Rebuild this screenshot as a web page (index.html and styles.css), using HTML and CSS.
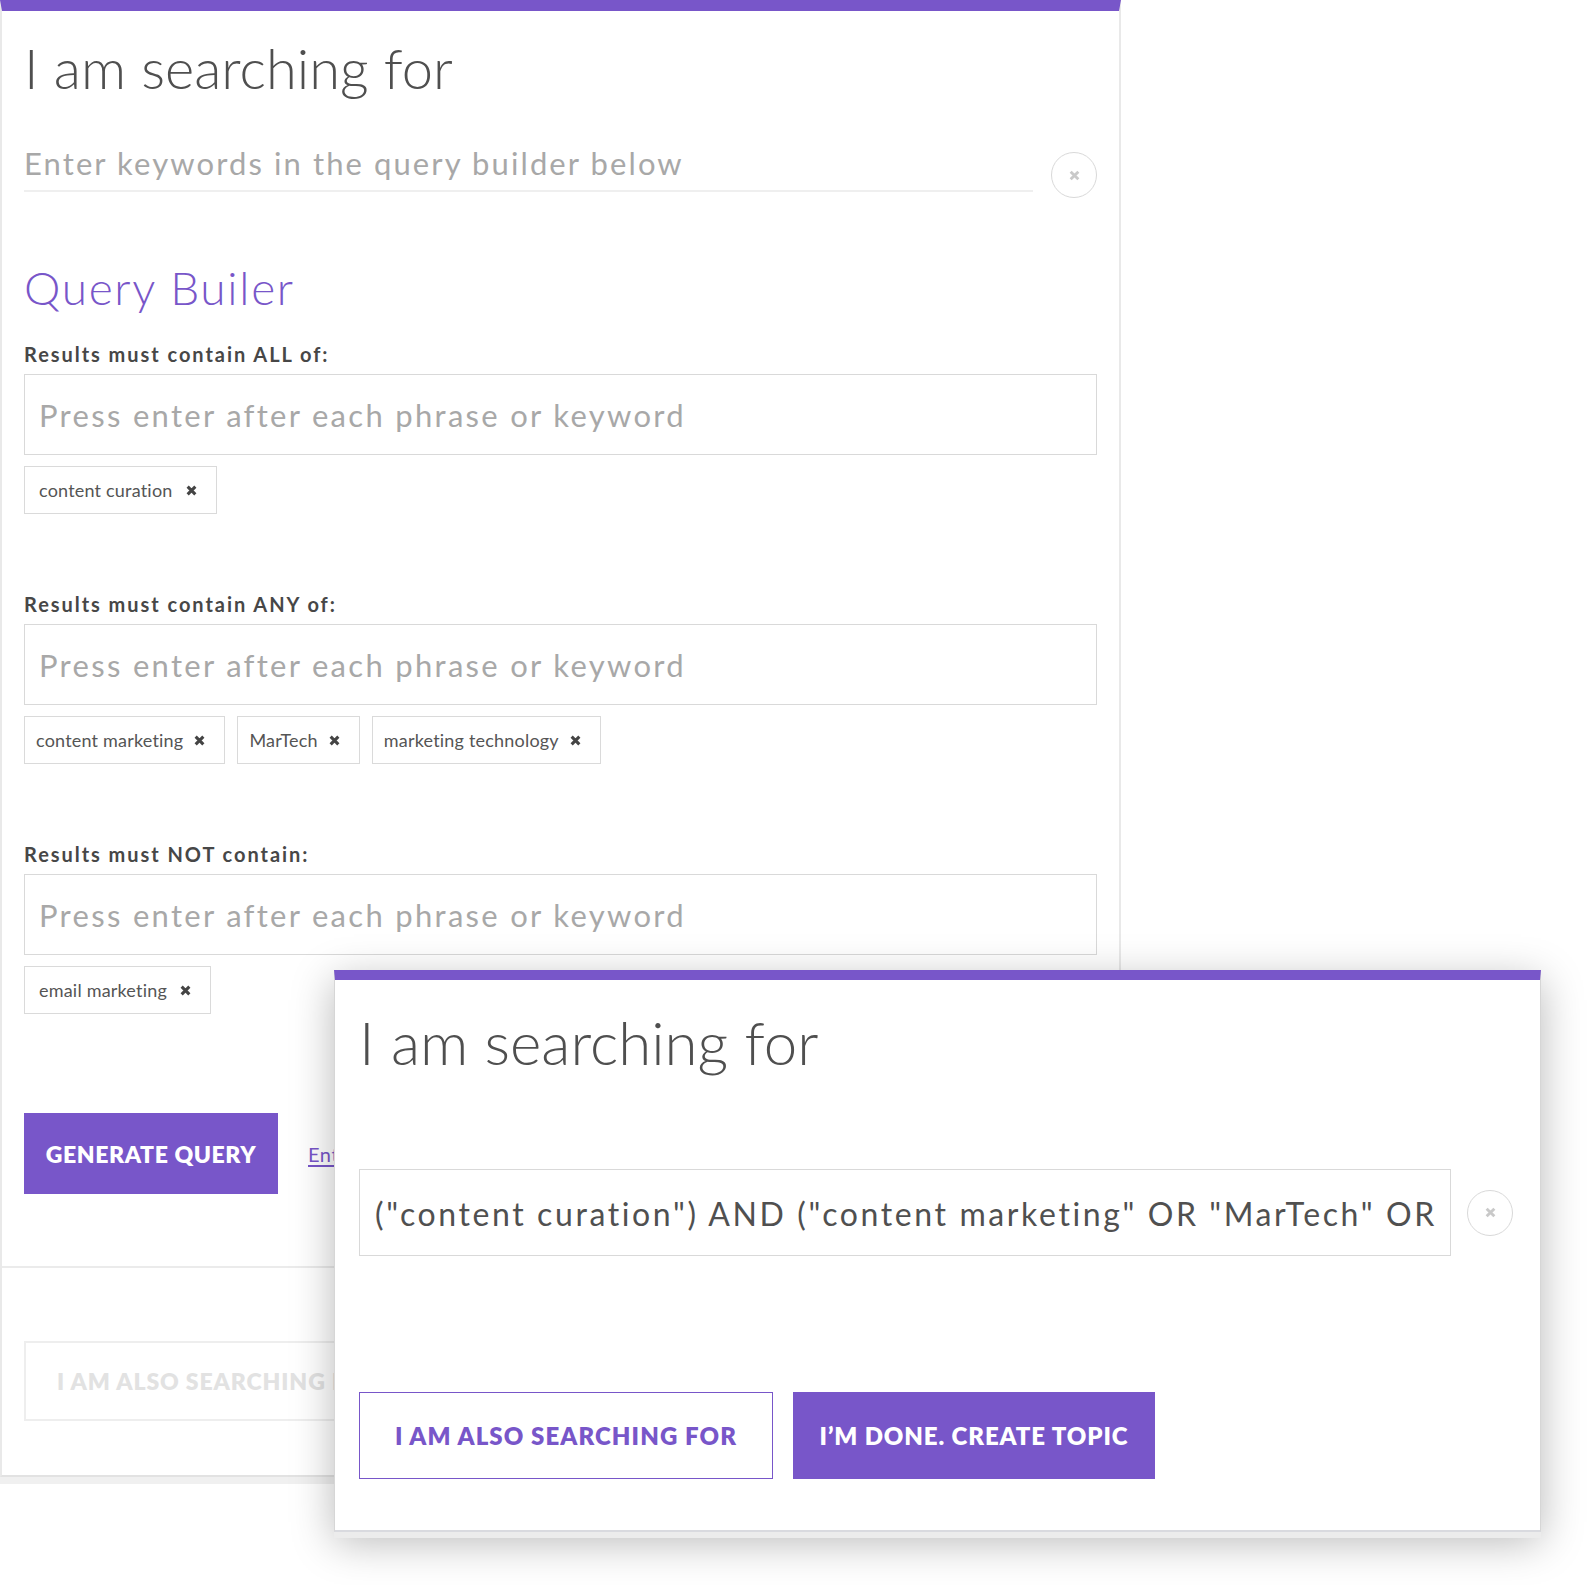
FILE: index.html
```html
<!DOCTYPE html>
<html lang="en">
<head>
<meta charset="utf-8">
<title>Query Builder</title>
<link rel="stylesheet" href="styles.css">
</head>
<body>
<div class="page">
  <section class="card builder">
    <div class="builder-body">
      <h1 class="title">I am searching for</h1>
      <div class="search-row">
        <div class="search-field">Enter keywords in the query builder below</div>
        <button class="clear-btn" type="button" aria-label="Clear">
          <svg viewBox="0 0 10 10" width="10" height="10"><path d="M1.5 1.5 L8.5 8.5 M8.5 1.5 L1.5 8.5" /></svg>
        </button>
      </div>

      <h2 class="qb-title">Query Builer</h2>

      <div class="group">
        <div class="group-label">Results must contain ALL of:</div>
        <div class="tag-input">Press enter after each phrase or keyword</div>
        <div class="tags">
          <span class="tag tag-wide">content curation<svg class="tag-x" viewBox="0 0 10 10"><path d="M1.5 1.5 L8.5 8.5 M8.5 1.5 L1.5 8.5" /></svg></span>
        </div>
      </div>

      <div class="group">
        <div class="group-label">Results must contain ANY of:</div>
        <div class="tag-input">Press enter after each phrase or keyword</div>
        <div class="tags">
          <span class="tag">content marketing<svg class="tag-x" viewBox="0 0 10 10"><path d="M1.5 1.5 L8.5 8.5 M8.5 1.5 L1.5 8.5" /></svg></span>
          <span class="tag">MarTech<svg class="tag-x" viewBox="0 0 10 10"><path d="M1.5 1.5 L8.5 8.5 M8.5 1.5 L1.5 8.5" /></svg></span>
          <span class="tag">marketing technology<svg class="tag-x" viewBox="0 0 10 10"><path d="M1.5 1.5 L8.5 8.5 M8.5 1.5 L1.5 8.5" /></svg></span>
        </div>
      </div>

      <div class="group">
        <div class="group-label">Results must NOT contain:</div>
        <div class="tag-input">Press enter after each phrase or keyword</div>
        <div class="tags">
          <span class="tag tag-wide">email marketing<svg class="tag-x" viewBox="0 0 10 10"><path d="M1.5 1.5 L8.5 8.5 M8.5 1.5 L1.5 8.5" /></svg></span>
        </div>
      </div>

      <div class="actions">
        <button class="btn btn-primary btn-generate" type="button">GENERATE QUERY</button>
        <a class="manual-link" href="#">Enter query manually</a>
      </div>
    </div>
    <div class="builder-footer">
      <button class="btn btn-disabled" type="button">I AM ALSO SEARCHING FOR</button>
    </div>
  </section>

  <section class="card modal">
    <h1 class="title modal-title">I am searching for</h1>
    <div class="query-row">
      <div class="query-field">
        <div class="query-text">("content curation") AND ("content marketing" OR "MarTech" OR</div>
      </div>
      <button class="clear-btn" type="button" aria-label="Clear">
        <svg viewBox="0 0 10 10" width="10" height="10"><path d="M1.5 1.5 L8.5 8.5 M8.5 1.5 L1.5 8.5" /></svg>
      </button>
    </div>
    <div class="modal-actions">
      <button class="btn btn-outline" type="button">I AM ALSO SEARCHING FOR</button>
      <button class="btn btn-primary btn-done" type="button">I’M DONE. CREATE TOPIC</button>
    </div>
  </section>
</div>
</body>
</html>
```

FILE: styles.css
```css
* {
  box-sizing: border-box;
}

html,
body {
  margin: 0;
  padding: 0;
  background: #ffffff;
}

body {
  font-family: Lato, "Open Sans", "Liberation Sans", sans-serif;
  color: #4a4a4a;
}

.page {
  position: relative;
  width: 1590px;
  height: 1585px;
  overflow: hidden;
}

/* ---------- left builder card ---------- */
.builder {
  width: 1121px;
  background: #ffffff;
  border-left: 2px solid #e9e9e9;
  border-right: 2px solid #e9e9e9;
  border-top: 11px solid #7856c9;
  border-bottom: 2px solid #e2e2e2;
  box-shadow: 0 7px 0 #f0f0f0;
}

.builder-body {
  padding: 0 22px;
}

.title {
  margin: 23px 0 0;
  font-size: 56px;
  line-height: 1.2;
  font-weight: 300;
  color: #4f4f4f;
  letter-spacing: 0;
}

.search-row {
  display: flex;
  align-items: flex-start;
  gap: 18px;
  margin-top: 42px;
}

.search-field {
  flex: 1;
  font-size: 31px;
  line-height: 37px;
  letter-spacing: 2.1px;
  color: #a8a8a8;
  padding-top: 2px;
  padding-bottom: 8px;
  border-bottom: 2px solid #efefef;
  white-space: nowrap;
}

.clear-btn {
  flex: none;
  width: 46px;
  height: 46px;
  margin-top: 9px;
  border: 1px solid #d9d9d9;
  border-radius: 50%;
  background: #ffffff;
  padding: 0;
  display: flex;
  align-items: center;
  justify-content: center;
}

.clear-btn svg {
  width: 11px;
  height: 11px;
  stroke: #c9c9c9;
  stroke-width: 2.6;
  fill: none;
}

.qb-title {
  margin: 62px 0 0;
  font-size: 46px;
  line-height: 1.2;
  font-weight: 300;
  letter-spacing: 1.7px;
  color: #7856c9;
}

.group {
  margin-top: 78px;
}

.qb-title + .group {
  margin-top: 27px;
}

.group-label {
  font-size: 20px;
  line-height: 24px;
  font-weight: 700;
  letter-spacing: 1.95px;
  color: #474747;
  margin-bottom: 8px;
  white-space: nowrap;
}

.tag-input {
  height: 81px;
  border: 1px solid #d9d9d9;
  padding: 22px 14px 0;
  font-size: 31px;
  line-height: 37px;
  letter-spacing: 2.3px;
  color: #a8a8a8;
  white-space: nowrap;
}

.tags {
  display: flex;
  gap: 12px;
  margin-top: 11px;
}

.tag {
  display: inline-flex;
  align-items: center;
  height: 48px;
  padding: 0 19px 0 11px;
  border: 1px solid #dadada;
  font-size: 18px;
  letter-spacing: 0.2px;
  color: #555555;
  white-space: nowrap;
}

.tag-wide {
  padding-left: 14px;
}

.tag-x {
  width: 11px;
  height: 11px;
  margin-left: 11px;
  stroke: #444444;
  stroke-width: 2.8;
  fill: none;
}

.tag-wide .tag-x {
  margin-left: 13px;
}

.actions {
  display: flex;
  align-items: center;
  gap: 30px;
  margin-top: 99px;
}

.btn {
  font-family: Lato, "Open Sans", "Liberation Sans", sans-serif;
  font-weight: 800;
  text-transform: uppercase;
  padding: 0;
  cursor: pointer;
  white-space: nowrap;
}

.btn-primary {
  background: #7856c9;
  color: #ffffff;
  border: 1px solid #7856c9;
}

.btn-generate {
  width: 254px;
  height: 81px;
  font-size: 23px;
  letter-spacing: 0.6px;
}

.manual-link {
  font-size: 20px;
  letter-spacing: 0.6px;
  color: #7856c9;
  text-decoration: underline;
  text-underline-offset: 3px;
  white-space: nowrap;
}

.builder-footer {
  margin-top: 72px;
  border-top: 2px solid #ebebeb;
  padding: 73px 22px 54px;
}

.btn-disabled {
  height: 80px;
  width: 420px;
  background: #ffffff;
  border: 2px solid #eeeeee;
  color: #e2e2e2;
  font-size: 23px;
  letter-spacing: 0.9px;
  text-align: left;
  padding-left: 31px;
}

/* ---------- modal overlay ---------- */
.modal {
  position: absolute;
  left: 334px;
  top: 970px;
  width: 1207px;
  height: 562px;
  background: #ffffff;
  border-top: 10px solid #7856c9;
  border-left: 1px solid #d6d6d6;
  border-right: 1px solid #d6d6d6;
  border-bottom: 2px solid #d9dadf;
  box-shadow: 0 6px 0 #ececec, 0 10px 40px rgba(0, 0, 0, 0.28);
  padding: 0 27px 0 24px;
}

.modal-title {
  margin-top: 26px;
  font-size: 60px;
}

.query-row {
  display: flex;
  align-items: center;
  gap: 16px;
  margin-top: 91px;
}

.query-row .clear-btn {
  margin-top: 0;
}

.query-field {
  width: 1092px;
  height: 87px;
  border: 1px solid #d9d9d9;
  padding: 3px 10px 0 15px;
}

.query-text {
  font-size: 32px;
  line-height: 82px;
  letter-spacing: 2.6px;
  color: #505050;
  white-space: nowrap;
}

.modal-actions {
  display: flex;
  gap: 20px;
  margin-top: 136px;
}

.btn-outline {
  width: 414px;
  height: 87px;
  background: #ffffff;
  color: #7856c9;
  border: 1px solid #7856c9;
  font-size: 24px;
  letter-spacing: 1.1px;
}

.btn-done {
  width: 362px;
  height: 87px;
  font-size: 24px;
  letter-spacing: 0.9px;
}
```
